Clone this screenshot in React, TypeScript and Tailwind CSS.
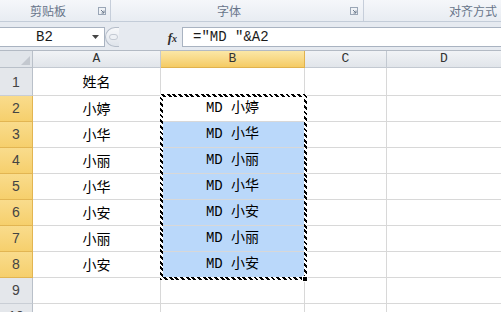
import React from 'react';

const names = ['小婷', '小华', '小丽', '小华', '小安', '小丽', '小安'];

const cjk = { fontFamily: '"Noto Sans CJK SC", sans-serif' };
const mono = { fontFamily: '"Liberation Mono", "Noto Sans CJK SC", monospace' };

const Launcher: React.FC = () => (
  <svg width="8" height="8" viewBox="0 0 8 8" className="shrink-0">
    <rect x="0.5" y="0.5" width="7" height="7" fill="none" stroke="#9aa6b6" />
    <path d="M3 3 L6 6 M6 3.5 V6 H3.5" stroke="#6f7c8e" fill="none" />
  </svg>
);

const RowHeader: React.FC<{ n: number; active?: boolean; h: string }> = ({ n, active, h }) => (
  <div
    className={`${h} w-[33px] shrink-0 flex items-end justify-center pb-[2px] border-r border-b text-[14px] text-[#444] ${
      active
        ? 'bg-gradient-to-b from-[#f9dc8c] to-[#f6cf6c] border-r-[#e2b552] border-b-[#e2b552]'
        : 'bg-[#e4e7eb] border-r-[#b9c0c9] border-b-[#c9ced5]'
    }`}
    style={{ fontFamily: '"Liberation Sans", Arial, sans-serif' }}
  >
    {n}
  </div>
);

const App: React.FC = () => {
  const rows = Array.from({ length: 10 }, (_, i) => i + 1);

  return (
    <div className="relative w-[501px] h-[312px] overflow-hidden bg-white">
      {/* ribbon group labels */}
      <div
        className="h-[22px] flex bg-gradient-to-b from-[#f5f7fa] to-[#e8ecf2] border-b border-[#c3ccd8] text-[12px] text-[#68758a]"
        style={cjk}
      >
        <div className="w-[111px] flex items-center pl-[30px] pr-[4px] border-r border-[#c6ceda]">
          <span>剪贴板</span>
          <div className="ml-auto">
            <Launcher />
          </div>
        </div>
        <div className="w-[253px] flex items-center pl-[106px] pr-[5px] border-r border-[#c6ceda]">
          <span>字体</span>
          <div className="ml-auto">
            <Launcher />
          </div>
        </div>
        <div className="flex-1 flex items-center pl-[85px] whitespace-nowrap">
          <span>对齐方式</span>
        </div>
      </div>

      {/* formula bar */}
      <div className="h-[28px] bg-[#e6eaf0] pt-[5px] pb-[3px]">
        <div className="h-[20px] flex">
          <div className="w-[105px] bg-white border-y border-r border-[#a9b3c1] flex items-center pl-[36px] pr-[4px] text-[14px] text-[#1a1a1a]" style={mono}>
            <span>B2</span>
            <svg width="7" height="4" viewBox="0 0 7 4" className="ml-auto mr-[1px]">
              <path d="M0 0 H7 L3.5 4 Z" fill="#444" />
            </svg>
          </div>
          <div className="w-[14px] h-[20px] rounded-l-full border-y border-l border-[#b5bdc9] bg-gradient-to-b from-[#f7f8fa] to-[#dfe4eb] flex items-center pl-[3px]">
            <div className="w-[9px] h-[6px] rounded-full border border-[#c4cad3] bg-[#eef1f5]" />
          </div>
          <div className="flex-1 flex items-center justify-end pr-[5px]">
            <span
              className="italic font-bold text-[13px] text-[#2d2d2d] leading-none"
              style={{ fontFamily: '"Liberation Serif", serif' }}
            >
              f<span className="text-[10px]">x</span>
            </span>
          </div>
          <div className="w-[319px] bg-white border-y border-l border-[#a9b3c1] flex items-center pl-[10px] text-[14px] text-[#1a1a1a] whitespace-pre" style={mono}>
            {'=″MD ″&A2'}
          </div>
        </div>
      </div>

      {/* grid */}
      <div className="border-t border-[#b3bac4]">
        <div className="flex h-[17px] text-[13px] text-[#333]" style={mono}>
          <div className="w-[33px] shrink-0 bg-[#e1e5ea] border-r border-b border-[#b9c0c9] flex items-end justify-end p-[2px]">
            <svg width="9" height="9" viewBox="0 0 9 9">
              <path d="M9 0 V9 H0 Z" fill="#c3c8cf" />
            </svg>
          </div>
          <div className="w-[128px] shrink-0 bg-gradient-to-b from-[#f1f3f6] to-[#e1e5ea] border-r border-b border-[#c3c9d1] flex items-center justify-center">A</div>
          <div className="w-[144px] shrink-0 bg-gradient-to-b from-[#fbe7a6] to-[#f5cb63] border-r border-b border-[#e0b24e] flex items-center justify-center">B</div>
          <div className="w-[82px] shrink-0 bg-gradient-to-b from-[#f1f3f6] to-[#e1e5ea] border-r border-b border-[#c3c9d1] flex items-center justify-center">C</div>
          <div className="flex-1 bg-gradient-to-b from-[#f1f3f6] to-[#e1e5ea] border-b border-[#c3c9d1] flex items-center justify-center">D</div>
        </div>

        {rows.map((n) => {
          const h = n === 1 ? 'h-[28px]' : 'h-[26px]';
          const active = n >= 2 && n <= 8;
          const name = n === 1 ? '姓名' : active ? names[n - 2] : '';
          return (
            <div key={n} className="flex">
              <RowHeader n={n} active={active} h={h} />
              <div className={`${h} w-[128px] shrink-0 border-r border-b border-[#d8d8d8] flex items-center justify-center text-[14px] text-black`} style={cjk}>
                {name}
              </div>
              <div
                className={`${h} w-[144px] shrink-0 border-r border-b border-[#d8d8d8] flex items-center justify-center text-[14px] text-black whitespace-pre ${
                  n >= 3 && n <= 8 ? 'bg-[#bad8fa]' : 'bg-white'
                }`}
                style={mono}
              >
                {active ? `MD ${name}` : ''}
              </div>
              <div className={`${h} w-[82px] shrink-0 border-r border-b border-[#d8d8d8]`} />
              <div className={`${h} flex-1 border-b border-[#d8d8d8]`} />
            </div>
          );
        })}
      </div>

      {/* copy selection marching ants */}
      <div className="absolute left-[160px] top-[94px] w-[147px] h-[186px] border-[3px] border-solid [border-image:repeating-linear-gradient(45deg,#000_0_2px,#fff_2px_4px)_3] pointer-events-none" />
      <div className="absolute left-[302px] top-[276px] w-[6px] h-[6px] bg-black border border-white" />
    </div>
  );
};

export default App;
